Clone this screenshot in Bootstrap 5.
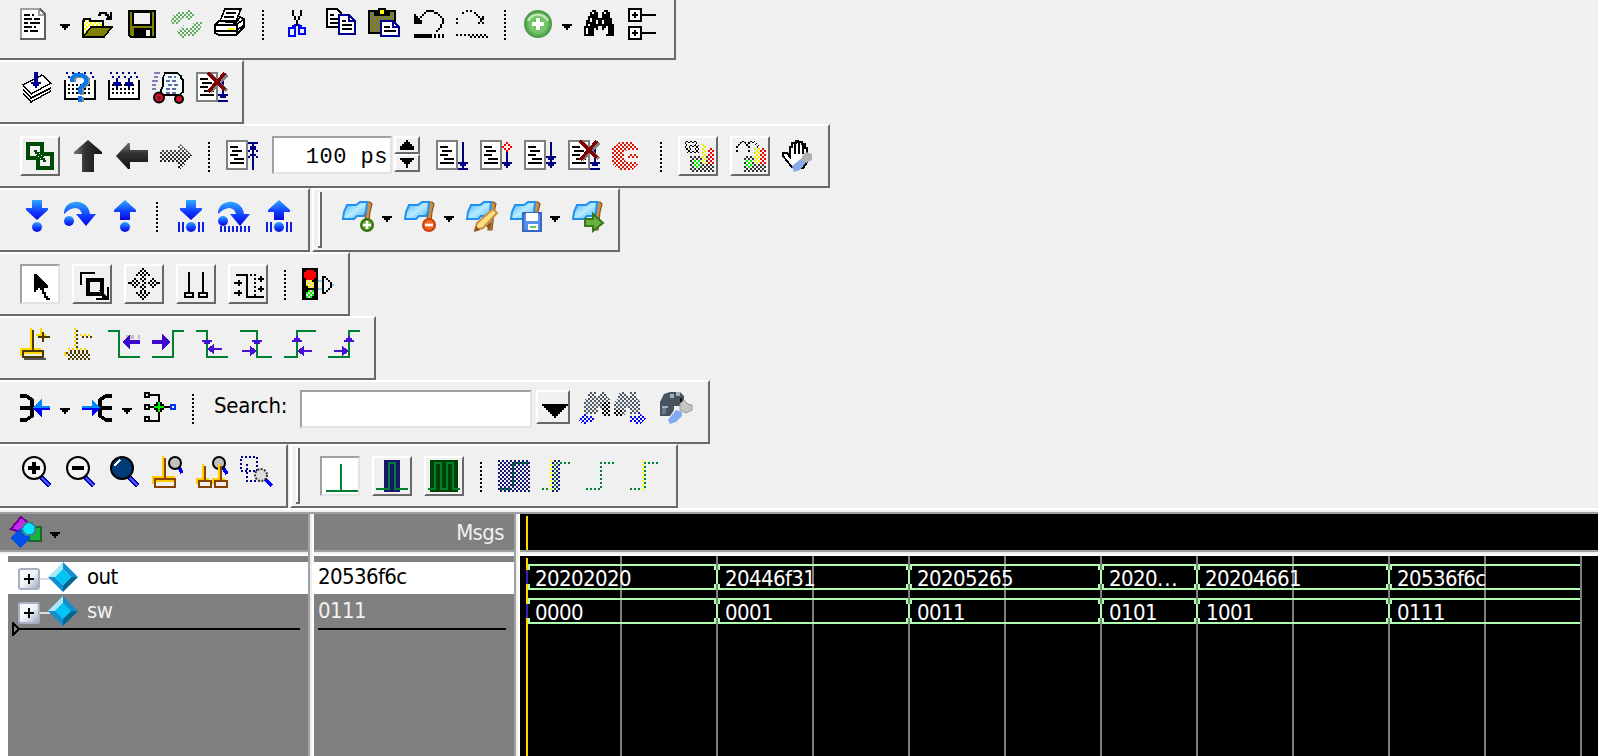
<!DOCTYPE html>
<html lang="en">
<head>
<meta charset="utf-8">
<title>Wave</title>
<link href="https://cdn.jsdelivr.net/npm/bootstrap@5.3.0/dist/css/bootstrap.min.css" rel="stylesheet">
<style>
body{background:#f0f0f0;color:#000;font:22px/28px "DejaVu Sans Condensed","Noto Sans",sans-serif;letter-spacing:-.6px;width:1598px;height:756px}
.bars{margin-top:-4px}
.bar-row{height:64px;gap:2px}
.tb{height:64px;border-top:2px solid #fff;border-right:2px solid #696969;border-bottom:2px solid #696969;padding:10px 14px 10px 20px;gap:12px;align-items:flex-start}
.tb.tall .ic,.tb.tall .sp{margin-top:4px}
.tb.second{border-left:2px solid #fff;padding:2px 14px 2px 4px;gap:0}
.tb.second .inner{gap:12px;padding-top:8px}
.grip{width:4px;height:56px;border-right:2px solid #696969;border-bottom:2px solid #696969;background:#fff;margin:0 20px 0 0}
.ic{width:32px;height:32px;flex:none;fill:none;stroke:#000;stroke-width:1;shape-rendering:crispEdges;display:block;overflow:visible}
.soft{shape-rendering:auto}
.drop{width:10px;height:32px;margin-left:-4px;flex:none;fill:#000;shape-rendering:crispEdges}
.sp{width:2px;height:32px;margin:0 4px;flex:none;background:repeating-linear-gradient(#000 0 2px,transparent 2px 4px) 0 2px/2px 30px no-repeat}
.key{width:40px;height:40px;flex:none;border:2px solid;border-color:#fff #696969 #696969 #fff;padding:2px}
.key.on{background:#fff;border-color:#a0a0a0 #e3e3e3 #e3e3e3 #a0a0a0}
.tb.tall .key .ic{margin-top:0}
.field{height:38px;background:#fff;border:2px solid;border-color:#a0a0a0 #e3e3e3 #e3e3e3 #a0a0a0;flex:none}
.time{width:120px;margin-left:2px;font:22px/39px "Liberation Mono",monospace;letter-spacing:.5px;text-align:right;padding-right:2px;white-space:pre}
.spin{width:26px;margin:0 4px 0 -10px}
.spin div{height:18px;border:2px solid;border-color:#fff #696969 #696969 #fff}
.spin svg{display:block;width:22px;height:14px;shape-rendering:crispEdges}
.wave{border-top:2px solid #fff;height:248px;margin-top:0}
.edge{height:4px;background:linear-gradient(#f0f0f0 50%,#a0a0a0 50%)}
.sash{width:6px;background:linear-gradient(90deg,#a0a0a0 0 2px,#f0f0f0 2px 4px,#fff 4px)}
.head{height:36px;background:#808080;color:#f0f0f0}
.rule6{height:6px;background:linear-gradient(#a0a0a0 0 2px,#f0f0f0 2px 4px,#fff 4px)}
.gray{background:#808080}
.names{width:308px}.msgs{width:200px}
.sig{height:34px;line-height:30px}
.sig.pick{background:#fff;height:32px;color:#000}
.unsel{color:#f0f0f0}
.tree{width:62px;height:32px;margin:0 7px 0 10px;flex:none}
.end{height:14px;display:block;shape-rendering:crispEdges}
.plot text{fill:#fff;font-size:22px}
.plot .dots{letter-spacing:.9px}
</style>
</head>
<body class="overflow-hidden">
<svg width="0" height="0" class="position-absolute">
<defs>
<pattern id="ck" width="2" height="2" patternUnits="userSpaceOnUse"><path d="M0 0h1v1H0zM1 1h1v1H1z" fill="#fff" stroke="none"/></pattern>
<mask id="dm" maskUnits="userSpaceOnUse" x="0" y="0" width="16" height="16"><rect width="16" height="16" fill="url(#ck)" stroke="none"/></mask>
<linearGradient id="blu" x2="0" y2="1"><stop stop-color="#30a8ff"/><stop offset=".6" stop-color="#1038ff"/><stop offset="1" stop-color="#0808d8"/></linearGradient>
<linearGradient id="blk" x2="1" y2="0"><stop stop-color="#777"/><stop offset=".4" stop-color="#333"/><stop offset="1" stop-color="#111"/></linearGradient>
<linearGradient id="blkv" x2="0" y2="1"><stop stop-color="#777"/><stop offset=".4" stop-color="#333"/><stop offset="1" stop-color="#111"/></linearGradient>
<radialGradient id="grn"><stop stop-color="#54c040"/><stop offset=".6" stop-color="#7cc870"/><stop offset="1" stop-color="#4a9a46"/></radialGradient>
<linearGradient id="sky" x2="1" y2="1"><stop stop-color="#38a8f8"/><stop offset=".5" stop-color="#b8ecff"/><stop offset="1" stop-color="#48b0f8"/></linearGradient>
<linearGradient id="box" x2="1" y2="1"><stop stop-color="#fff"/><stop offset=".5" stop-color="#f0f2f8"/><stop offset="1" stop-color="#98a4bc"/></linearGradient>
</defs>
<symbol id="list" viewBox="0 0 16 16"><path d="M.5.5h10v14H.5z" fill="#fff" stroke="#808080"/><path d="M2 3.500h4M3 5.500h5M2 7.500h4M4 9.500h5M2 11.500h7"/></symbol>
<symbol id="kill" viewBox="0 0 16 16"><path d="M13.500 4v9M11 11.500h5M12 12.500h3M11 14.500h5" stroke="#000080"/><path d="M7 1l8.500 8.500M15.500 1.500L7 10" stroke="#808080" stroke-width="1.500"/><path d="M6 .5l8.500 8.500M14.500.5L6 10" stroke="#800000" stroke-width="1.700"/></symbol>
<symbol id="flag" viewBox="0 0 16 16"><path d="M11 1h3l1 1-1 4-1 9h-2l1-9z" fill="#c89048" stroke="#8a5420" stroke-width=".6"/><path d="M2.500 2.500H7l2-1.500h3.500L12 6l-1 2H7.500L6 9.500H.5L1 6z" fill="url(#sky)" stroke="#2090f0"/></symbol>
<symbol id="tray" viewBox="0 0 16 16"><path d="M.5 4v9.500h15V4" fill="#fff" stroke="#000"/><path d="M2 6.500h12M2 8.500h12M2 10.500h12" stroke="#000" stroke-dasharray="1 1"/><path d="M1 .5h14M2 2.500h13" stroke="#000080" stroke-dasharray="1 2"/></symbol>
<symbol id="glass" viewBox="0 0 16 16"><path d="M10 10l5 5" stroke="#0000a8" stroke-width="2.800"/><path d="M11 11l4 4" stroke="#4858ff" stroke-width=".8"/></symbol>
<symbol id="bino" viewBox="0 0 16 16"><path d="M4 0h2v1h1v3h2V1h1V0h2v1h1v3h1v3h1v6h-4V9h-1v1H9V8H7v2H6V9H5v4H0V8h1V5h1V3h1V1h1z" fill="#000" stroke="none"/><path d="M4.500 1v1M10.500 1v1M3.500 4v2M2.500 7v1M1.500 9v3M6.500 5v2M9.500 5v2M11.500 8v4" stroke="#fff" stroke-width=".8"/></symbol>
</svg>

<div class="bars d-flex flex-column">
 <div class="bar-row d-flex">
  <div class="tb d-flex">
   <svg class="ic" viewBox="0 0 16 16"><path d="M0 0h10l3 3v13H0z" fill="#fff" stroke="none"/><path d="M.5 16V.5H10" stroke="#a0a0a0"/><path d="M9.500 1v2.500h3" stroke="#a0a0a0"/><path d="M10 .5l2.500 2.500v12.500H0" stroke="#606060"/><path d="M2 3.500h3m1 0h1M2 5.500h4m1 0h3M2 7.500h2m1 0h5M2 9.500h4m1 0h1M2 11.500h2m1 0h4"/></svg>
   <svg class="drop" viewBox="0 0 5 16"><path d="M0 8h5v1H4v1H3v1H2v-1H1V9H0z"/></svg>
   <svg class="ic" viewBox="0 0 16 16"><path d="M0 6h1V5h3v1h6v4H4l-4 4z" fill="#ff0" stroke="none"/><path d="M0 6h1V5h3v1h6v4H4l-4 4z" fill="#fff" stroke="none" mask="url(#dm)"/><path d="M.5 14V6.500H1v-1h3v1h6.500V9" stroke-width=".6"/><path d="M.5 14.500l4-5h10.500l-4 5z" fill="#808000" stroke-width=".8"/><path d="M8 3.500h1v-1h3v1h1v1h1.500M14.500 2v3M12 5.500h3"/></svg>
   <svg class="ic" viewBox="0 0 16 16"><path d="M1.500 1.500h13v13h-12l-1-1z" fill="#808000"/><path d="M3.500 2h9v6.500h-9z" fill="#f0f0f0"/><path d="M4 10h9v4H4z" fill="#000" stroke="none"/><path d="M10 11h2v3h-2z" fill="#f0f0f0" stroke="none"/></svg>
   <svg class="ic" viewBox="0 0 16 16"><g mask="url(#dm)" fill="#5fac5f" stroke="none"><path d="M0 8l1-4 3-2h5V0l4 3.500L9 7V5H6L4 8z"/><path d="M16 7l-1 4-3 3H7v2l-4-4 4-4v2h3l2-3z"/></g></svg>
   <svg class="ic" viewBox="0 0 16 16"><path d="M5.500.5h8L11 6.500H3z" fill="#fff" stroke-width=".8"/><path d="M6 2.500h5M5 4.500h5"/><path d="M2.500 6.500L.5 8.500v4l2 1h8.500l4-4v-4l-2-1-2 3z" fill="#fff" stroke-width=".8"/><path d="M1 8.500h10l4-3M1 11.500h10l4-3M11.500 8v5" stroke-width=".8"/><path d="M7 10h3v1H7z" fill="#ff0" stroke="none"/></svg>
   <div class="sp"></div>
   <svg class="ic" viewBox="0 0 16 16"><path d="M6.500 1v3M7.500 4v2M8.500 6v3M10.500 1v3M9.500 4v2"/><path d="M7.500 8v1h-1v1h-2v4h3V9M9.500 8v1h1v1h2v3h-3V9" stroke="#00f"/></svg>
   <svg class="ic" viewBox="0 0 16 16"><path d="M1.500.5h5l2 2v7h-7z" fill="#fff"/><path d="M3 3.500h2M3 5.500h4M3 7.500h4"/><path d="M7.500 3.500h5l3 3v6.500h-8z" fill="#fff" stroke="#000090"/><path d="M12.500 4v2.500H15" stroke="#000090"/><path d="M9 6.500h2M9 8.500h5M9 10.500h5"/></svg>
   <svg class="ic" viewBox="0 0 16 16"><path d="M.5 1.500h13v11H.5z" fill="#808000"/><path d="M1 2h12v10H1z" fill="#777" stroke="none" mask="url(#dm)"/><path d="M3.500 3.500V2.500h2V.5h3v2h2v1z" fill="#ff0"/><path d="M6.500 6.500h6l3 3v4.500h-9z" fill="#fff" stroke="#000090"/><path d="M12.500 7v2.500H15" stroke="#000090"/><path d="M8 9.500h3M8 11.500h6"/></svg>
   <svg class="ic" viewBox="0 0 16 16"><path d="M1 3h1v1h1v1h1v1h1v2H1z" fill="#000" stroke="none"/><path d="M4 4.500h1M5 3.500h1M6 2.500h1M7 1.500h4M11 2.500h2M13 3.500h1M14.500 4v1M15.500 5v3M14.500 8v2M13.500 10v1M12.500 11v1"/><path d="M1 14h9" stroke-width="2"/><path d="M11 14h5" stroke-width="2" stroke-dasharray="1 1"/></svg>
   <svg class="ic" viewBox="0 0 16 16"><path d="M0 5.500h1M0 7.500h1M3 2.500h1M5 1.500h1M7 1.500h1M9 2.500h1M10 3.500h1M11 4.500h1M13 4.500h1M12 5.500h1M11 7.500h1M12 6.500h1M13 7.500h1M13 5.500h1"/><path d="M0 13.500h16" stroke-dasharray="1 1"/><path d="M7 14.500h9" stroke-dasharray="1 1"/></svg>
   <div class="sp"></div>
   <svg class="ic soft" viewBox="0 0 16 16"><circle cx="8" cy="8" r="6.600" fill="url(#grn)" stroke="#4c9c4c" stroke-width=".8"/><path d="M3 6.500a5.500 5.500 0 0 1 10 0" stroke="#c0e8b8" stroke-width="1.200"/><path d="M8 5v6M5 8h6" stroke="#fff" stroke-width="2"/></svg>
   <svg class="drop" viewBox="0 0 5 16"><path d="M0 8h5v1H4v1H3v1H2v-1H1V9H0z"/></svg>
   <svg class="ic" viewBox="0 -1 16 16"><use href="#bino" width="16" height="16"/></svg>
   <svg class="ic" viewBox="0 0 16 16"><path d="M.5.5h6v6h-6zM.5 9.500h6v6h-6z" fill="#fff"/><path d="M7 3.500h7M7 12.500h7M2 3.500h3M3.500 2v3M2 12.500h3M3.500 11v3"/></svg>
  </div>
 </div>

 <div class="bar-row d-flex">
  <div class="tb d-flex">
   <svg class="ic" viewBox="0 0 16 16"><path d="M1.500 11l4 4.500 10-5V5l-5-3.500-9 5z" fill="#fff" stroke="none"/><path d="M1.500 6.500L11 1.500l4.500 4-10 5.500zM1.500 8.500l4 4.500 10-5M1.500 10.500l4 4.500 10-5.500" stroke-width=".7"/><path d="M5.500 5.500h5M6.500 6.500h3M7.500 7.500h1" stroke="#000090" /><path d="M8 0v6" stroke="#000090" stroke-width="2"/></svg>
   <svg class="ic" viewBox="0 0 16 16"><use href="#tray"/><path d="M5 5V3l2-1h3l2 1.500v2L9 8v3.500M9 12.500v2.500" stroke="#888" stroke-width="2"/><path d="M4 5V3l1.500-1.500H9L11 3v2.500L8 8v3M8 12v3" stroke="#0878f0" stroke-width="2"/></svg>
   <svg class="ic" viewBox="0 0 16 16"><use href="#tray"/><path d="M4.500 3v5M2.500 5.500h4M3 6.500h3M10.500 3v5M8.500 5.500h4M9 6.500h3" stroke="#000090"/></svg>
   <svg class="ic" viewBox="0 0 16 16"><path d="M1 .5h3M1 2.500h2M0 4.500h3M0 6.500h2M0 8.500h2" stroke="#8080b0"/><path d="M6.500.5h6l2 1.500v1l1 1v6l-2 1.500h-8l-1-1V9l1-2V3z" fill="#efffff" stroke-width=".8"/><path d="M8 2.500h4M7 4.500h5M8 6.500h5M7 8.500h5M7 10.500h5" stroke="#6868a0" stroke-dasharray="2 1"/><g fill="#d01030" class="soft"><circle cx="3.500" cy="12.800" r="2.500"/><circle cx="13.500" cy="13.500" r="2"/></g><path d="M3.500 12v2M2.500 13h2" stroke="#801020" stroke-width=".6"/></svg>
   <svg class="ic" viewBox="0 0 16 16"><use href="#list"/><use href="#kill"/></svg>
  </div>
 </div>

 <div class="bar-row d-flex">
  <div class="tb tall d-flex">
   <div class="key"><svg class="ic" viewBox="0 0 16 16"><path d="M2 2h7v7H2zM7 7h7v7H7z" stroke="#004a08" stroke-width="2"/><path d="M6 6l4 4" stroke="#fff" stroke-width="2"/><path d="M5 5.500h1v1h1v1h1v1h1v1h1v1h1" stroke="#004a08"/></svg></div>
   <svg class="ic soft" viewBox="0 0 16 16"><path d="M8 0l7 6v1h-4v9H5V7H1V6z" fill="url(#blk)" stroke="none"/></svg>
   <svg class="ic soft" viewBox="0 0 16 16"><path d="M0 8l6-6.500h1V5h9v6H7v3.500H6z" fill="url(#blkv)" stroke="none"/></svg>
   <svg class="ic" viewBox="0 0 16 16"><g mask="url(#dm)"><path d="M16 8l-6-6H9v3H0v6h9v4h1z" fill="url(#blkv)" stroke="none"/></g></svg>
   <div class="sp"></div>
   <svg class="ic" viewBox="0 0 16 16"><use href="#list"/><path d="M13.500 1v14M11 1.500h5M12 4.500h3M11 5.500h1m3 0h1M12 7.500h3M11 8.500h1m3 0h1M12 3.500h3" stroke="#000080"/></svg>
   <div class="field time">100 ps</div>
   <div class="spin"><div><svg viewBox="0 0 11 7"><path d="M5 1h1v1h1v1h1v1h1v2H2V4h1V3h1V2h1z"/></svg></div><div><svg viewBox="0 0 11 7"><path d="M2 1h7v1H8v1H7v1H6v2H5V4H4V3H3V2H2z"/></svg></div></div>
   <svg class="ic" viewBox="0 0 16 16"><use href="#list"/><path d="M13.500 1v14M11 11.500h5M12 12.500h3M11 14.500h5" stroke="#000080"/></svg>
   <svg class="ic" viewBox="0 0 16 16"><use href="#list"/><path d="M13.500 6v8M11 11.500h5M12 12.500h3" stroke="#000080"/><path d="M13 1.500h1M12 2.500h1m1 0h1M11 3.500h1m3 0h1M12 4.500h1m1 0h1M13 5.500h1" stroke="#f00"/></svg>
   <svg class="ic" viewBox="0 0 16 16"><use href="#list"/><path d="M13.500 1v13M11 8.500h5M12 9.500h3M11 11.500h5M12 12.500h3" stroke="#000080"/></svg>
   <svg class="ic" viewBox="0 0 16 16"><use href="#list"/><use href="#kill"/></svg>
   <svg class="ic" viewBox="0 0 16 16"><path d="M5 1h6l2 2v10l-2 2H5l-2-2V3z" fill="#fff" stroke="none"/><path d="M4 1h6l3 3v8l-3 3H4l-4-3V4z" fill="#f0f0f0" stroke="none"/><path d="M4 1h6l3 3v1H8L6 6v4l2 1h5v1l-3 3H4l-4-3V4zM8 7h5v2H8z" fill="#d81808" stroke="none" mask="url(#dm)"/></svg>
   <div class="sp"></div>
   <div class="key"><svg class="ic" viewBox="0 0 16 16"><g mask="url(#dm)"><path d="M2 1h5v5H3L2 4zM4 3h4v3H4z" stroke-width="1.200"/><path d="M4 8h12v8H4z" fill="#333" stroke="none"/><path d="M10 2h2v10h-2z" fill="#ee0" stroke="none"/><path d="M13 4h3v8h-3z" fill="#e00" stroke="none"/><path d="M6 10h3v4H6z" fill="#0e0" stroke="none"/></g></svg></div>
   <div class="key"><svg class="ic" viewBox="0 0 16 16"><g mask="url(#dm)"><path d="M1.500 6V3l2-2h2l2 2v3M6 3l2-2h2l2 2v4" stroke-width="1.300"/><path d="M5 8h11v8H5z" fill="#333" stroke="none"/><path d="M10 4h3v8h-3z" fill="#ee0" stroke="none"/><path d="M13 4h3v8h-3z" fill="#e00" stroke="none"/><path d="M6 10h3v4H6z" fill="#0e0" stroke="none"/></g></svg></div>
   <svg class="ic" viewBox="0 0 16 16"><path d="M4.500 13l-4-5V6.500h2L4 8.500V3.500h1V1.500h2V.5h1v.5h2v1h1.500v2h1v7l-2 3H6z" fill="#fff"/><path d="M6.500 2v5M8.500 1v6M10.500 2.500V7" stroke-width=".9"/><g class="soft" stroke="none"><path d="M5 13l5-4 2 2-3 4-3 1z" fill="#88aaec"/><path d="M10 8l2-2 3 1v3l-3 1.500-2-1.500z" fill="#b0b0b0"/></g></svg>
  </div>
 </div>

 <div class="bar-row d-flex">
  <div class="tb d-flex">
   <svg class="ic soft" viewBox="0 0 16 16"><g fill="url(#blu)" stroke="none"><path d="M6 0h5v4h3v1l-5.500 5L3 5V4h3z"/><circle cx="8.500" cy="13.500" r="2.500"/></g></svg>
   <svg class="ic soft" viewBox="0 0 16 16"><g fill="url(#blu)" stroke="none"><path d="M0 6C1-1 12-1 13 7h3l-5 6-5-6h3C8 3 4 3 0 7z"/><circle cx="2.500" cy="10.500" r="2.500"/></g></svg>
   <svg class="ic soft" viewBox="0 0 16 16"><g fill="url(#blu)" stroke="none"><path d="M8.500 0L14 5v1h-3v4H6V6H3V5z"/><circle cx="8.500" cy="13.500" r="2.500"/></g></svg>
   <div class="sp"></div>
   <svg class="ic soft" viewBox="0 0 16 16"><g fill="url(#blu)" stroke="none"><path d="M6 0h5v4h3v1l-5.500 5L3 5V4h3z"/><circle cx="8.500" cy="13.500" r="2.500"/></g><path d="M2 13.500h4M12 13.500h4" stroke="#1020e0" stroke-width="5" stroke-dasharray="1 1"/></svg>
   <svg class="ic soft" viewBox="0 0 16 16"><g fill="url(#blu)" stroke="none"><path d="M0 6C1-1 12-1 13 7h3l-5 6-5-6h3C8 3 4 3 0 7z"/><circle cx="2.500" cy="10.500" r="2.500"/></g><path d="M1 14.500h15" stroke="#1020e0" stroke-width="3" stroke-dasharray="1 1"/></svg>
   <svg class="ic soft" viewBox="0 0 16 16"><g fill="url(#blu)" stroke="none"><path d="M8.500 0L14 5v1h-3v4H6V6H3V5z"/><circle cx="8.500" cy="13.500" r="2.500"/></g><path d="M2 13.500h4M12 13.500h4" stroke="#1020e0" stroke-width="5" stroke-dasharray="1 1"/></svg>
  </div>
  <div class="tb second d-flex"><div class="grip"></div><div class="inner d-flex">
   <svg class="ic soft" viewBox="0 0 16 16"><use href="#flag"/><circle cx="12.500" cy="12.500" r="3" fill="#60a830" stroke="#387010"/><path d="M12.500 10.500v4M10.500 12.500h4" stroke="#fff" stroke-width="1.300"/></svg>
   <svg class="drop" viewBox="0 0 5 16"><path d="M0 8h5v1H4v1H3v1H2v-1H1V9H0z"/></svg>
   <svg class="ic soft" viewBox="0 0 16 16"><use href="#flag"/><circle cx="12.500" cy="12.500" r="3" fill="#f06820" stroke="#c84008"/><path d="M10.500 12.500h4" stroke="#fff" stroke-width="1.300"/></svg>
   <svg class="drop" viewBox="0 0 5 16"><path d="M0 8h5v1H4v1H3v1H2v-1H1V9H0z"/></svg>
   <svg class="ic soft" viewBox="0 0 16 16"><use href="#flag"/><path d="M4.500 15l1-3.500 8-7 2 2-7 7.500z" fill="#ffe080" stroke="#c89040"/><path d="M4 16l1-3 2 2zM10 13l3-2-1 4z" fill="#905020" stroke="none"/></svg>
   <svg class="ic soft" viewBox="0 0 16 16"><use href="#flag"/><path d="M6.500 6.500h9v9h-9z" fill="#5890e8" stroke="#3868c0"/><path d="M8 6.500h6v4H8zM9 12h5v3H9z" fill="#fff" stroke="none"/><path d="M10 13h3v1h-3z" fill="#60d040" stroke="none"/></svg>
   <svg class="drop" viewBox="0 0 5 16"><path d="M0 8h5v1H4v1H3v1H2v-1H1V9H0z"/></svg>
   <svg class="ic soft" viewBox="0 0 16 16"><use href="#flag"/><path d="M6.500 9.500h4V7l5 4.500-5 4V13h-4z" fill="#68b040" stroke="#387818"/></svg>
  </div></div>
 </div>

 <div class="bar-row d-flex">
  <div class="tb tall d-flex">
   <div class="key on"><svg class="ic" viewBox="0 0 16 16"><path d="M5 3h1l6 6v1h-2v2h1v2h1v1h1v1h-2v-1h-1v-2H9v-2H8v-1H7v1H6v1H5z" fill="#000" stroke="none"/></svg></div>
   <div class="key"><svg class="ic" viewBox="0 0 16 16"><path d="M3 8V3h6M6 14V6h8M9 15h3" stroke="#fff"/><path d="M2.500 8.500v-6h7"/><path d="M6 6h7v7H6z" stroke-width="2"/><path d="M10 15.500h6v-6M12 11l3 4M13 14.500h3" stroke-width="1.300"/></svg></div>
   <div class="key"><svg class="ic" viewBox="0 0 16 16"><path d="M7 .5h1M6 1.500h1m1 0h1M5 2.500h1m1 0h1m1 0h1M4 3.500h1m1 0h1m1 0h1m1 0h1M7 4.500h1M6 5.500h1m1 0h1M3 5.500h1m8 0h1M2 6.500h1m1 0h1m2 0h1m3 0h1m1 0h1M1 7.500h1m1 0h1m1 0h1m2 0h1m1 0h1m1 0h1m1 0h1M2 8.500h1m1 0h1m2 0h1m3 0h1m1 0h1M3 9.500h1m2 0h1m1 0h1m3 0h1M7 10.500h1M6 11.500h1m1 0h1M4 12.500h1m1 0h1m1 0h1m1 0h1M5 13.500h1m1 0h1m1 0h1M6 14.500h1m1 0h1M7 15.500h1M0 7.500h1M15 7.500h1"/></svg></div>
   <div class="key"><svg class="ic" viewBox="0 0 16 16"><path d="M4.500 2v11M2.500 12.500h4v2h-4zM11.500 2v11M9.500 12.500h4v2h-4z"/></svg></div>
   <div class="key"><svg class="ic" viewBox="0 0 16 16"><path d="M2 3.500h5.500v11H16M1 7.500h4M3.500 6v3M1 12.500h4M3.500 11v3M13 5.500h3M14.500 4v3M13 10.500h3M14.500 9v3"/><path d="M9 3.500h3M11.500 5v10" stroke-dasharray="1 1"/></svg></div>
   <div class="sp"></div>
   <svg class="ic" viewBox="0 0 16 16"><path d="M0 0h8v16H0z" fill="#000" stroke="none"/><path d="M2 1h4v1h1v3H6v1H2V5H1V2h1z" fill="#f00" stroke="none"/><path d="M3 6h2v1h1v2H5v1H3V9H2V7h1z" fill="#ddd" stroke="none"/><path d="M3 11h2v1h1v2H5v1H3v-1H2v-2h1z" fill="#ddd" stroke="none"/><g mask="url(#dm)" stroke="none"><path d="M2 6h4v4H2z" fill="#fe0"/><path d="M2 11h4v4H2z" fill="#0e0"/></g><path d="M8 6.500h2M8 10.500h2M15 8.500h1" stroke="#8cc8e8"/><path d="M10.500 4v9M11 4.500h1M12 5.500h1M13.500 6v1M14.500 7v3M13.500 10v1M12 11.500h1M11 12.500h1"/></svg>
  </div>
 </div>

 <div class="bar-row d-flex">
  <div class="tb d-flex">
   <svg class="ic" viewBox="0 0 16 16"><path d="M5.500 0v11M10.500 0v4M8 3.500h5M.5 14v-3.500h10" stroke="#ffd800"/><path d="M6.500 1v10M11.500 2v5M9 4.500h6M1.500 11.500h10v3h-10z" stroke="#4a3a00"/><path d="M2 12.500h9" stroke="#ffd800"/><path d="M2 15.500h11" stroke="#555"/></svg>
   <svg class="ic" viewBox="0 0 16 16"><g stroke-dasharray="1 1"><path d="M5.500 0v10M8 3.500h5M2 10.500h9M0 12.500h1M0 13.500h1" stroke="#ffd800"/><path d="M6.500 1v10M9 4.500h6M3 11.500h9M1 12.500h12M2 13.500h11M3 14.500h10M2 15.500h11" stroke="#4a3a00"/></g></svg>
   <svg class="ic" viewBox="0 0 16 16"><path d="M0 1.500h5.500v13H16" stroke="#008030"/><path d="M9 4.500h4m2 0h1" stroke="#c0c0c0" stroke-width="2"/><path d="M7 7l4-4v3h5v2h-5v3z" fill="#3c08d0" stroke="none"/></svg>
   <svg class="ic" viewBox="0 0 16 16"><path d="M0 14.500h10.500v-13H16" stroke="#008030"/><path d="M9 7L5 3v3H0v2h5v3z" fill="#3c08d0" stroke="none"/></svg>
   <svg class="ic" viewBox="0 0 16 16"><path d="M0 1.500h5.500v13H16" stroke="#008030"/><path d="M3 6h5v1H7v1H4V7H3zM6 10l3-2v2h4v1H9v2L6 11z" fill="#4810d0" stroke="none"/></svg>
   <svg class="ic" viewBox="0 0 16 16"><path d="M0 1.500h8.500v13H16" stroke="#008030"/><path d="M6 6h5v1h-1v1H7V7H6zM8 11L5 9v2H1v1h4v2l3-2z" fill="#4810d0" stroke="none"/></svg>
   <svg class="ic" viewBox="0 0 16 16"><path d="M0 14.500h6.500v-13H16" stroke="#008030"/><path d="M4 7h5V6H8V5H7V4H6v1H5v1H4zM7 11l3-2v2h4v1h-4v2l-3-2z" fill="#4810d0" stroke="none"/></svg>
   <svg class="ic" viewBox="0 0 16 16"><path d="M0 14.500h10.500v-13H16" stroke="#008030"/><path d="M8 7h5V6h-1V5h-1V4h-1v1H9v1H8zM10 11L7 9v2H3v1h4v2l3-2z" fill="#4810d0" stroke="none"/></svg>
  </div>
 </div>

 <div class="bar-row d-flex">
  <div class="tb d-flex">
   <svg class="ic" viewBox="0 0 16 16"><path d="M0 2h3l3 2v8l-3 2H0M0 8h6" stroke-width="1.800"/><path d="M6 8l5-4.500V7h4v1z" fill="#0088ff" stroke="none"/><path d="M6 8l5 4.500V9h4V8z" fill="#00f" stroke="none"/></svg>
   <svg class="drop" viewBox="0 0 5 16"><path d="M0 8h5v1H4v1H3v1H2v-1H1V9H0z"/></svg>
   <svg class="ic" viewBox="0 0 16 16"><path d="M15 2h-3L9 4v8l3 2h3M9 8h6" stroke-width="1.800"/><path d="M9 8L5 3.500V7H0v1z" fill="#0088ff" stroke="none"/><path d="M9 8l-4 4.500V9H0V8z" fill="#00f" stroke="none"/></svg>
   <svg class="drop" viewBox="0 0 5 16"><path d="M0 8h5v1H4v1H3v1H2v-1H1V9H0z"/></svg>
   <svg class="ic" viewBox="0 0 16 16"><path d="M3 1.500h4.500v13H3M3 7.500h10M.5.500h2v2h-2zM.5 6.500h2v2h-2zM.5 12.500h2v2h-2z"/><path d="M7 4h1v1h1v1h1v1h1v1h-1v1H9v1H8v1H7v-1H6V9H5V8H4V7h1V6h1V5h1z" fill="#000" stroke="none"/><path d="M7.500 5v5M5 7.500h5" stroke="#0e0"/><path d="M13.500 6.500h2v2h-2z" stroke="#0030ff"/></svg>
   <div class="sp"></div>
   <div class="ms-1 me-0" style="width:74px;letter-spacing:-.2px">Search:</div>
   <div class="field" style="width:232px;margin-top:-2px"></div>
   <div class="key" style="width:34px;height:34px;margin:-2px -4px 0 -8px;padding:0"><svg class="ic" viewBox="0 0 16 16"><path d="M2 6h13v1h-1v1h-1v1h-1v1h-1v1h-1v1H9v1H8v-1H7v-1H6v-1H5V9H4V8H3V7H2z" fill="#000" stroke="none"/></svg></div>
   <svg class="ic" viewBox="0 0 16 16"><g mask="url(#dm)" stroke="none"><path d="M5 0h4v2h2V0h3v2l2 2v8h-4V8h-2v3H3V4l2-1z" fill="#4c5864"/><path d="M12 5h4v7h-4z" fill="#000"/><path d="M0 14l4-4v2h4v3H4v1H2z" fill="#00f"/></g></svg>
   <svg class="ic" viewBox="0 0 16 16" style="margin-left:-8px"><g mask="url(#dm)" stroke="none"><path d="M3 0h3v2h2V0h3v3l2 2v6H8V8H6v2l-1 2H0V5l2-2z" fill="#4c5864"/><path d="M0 9h4v3H0z" fill="#000"/><path d="M8 12h4v-2l4 3-3 3h-2v-1H8z" fill="#00f"/></g></svg>
   <svg class="ic soft" viewBox="0 0 16 16" style="margin:0 2px"><g stroke="none"><path d="M2 1l3-1h5l2 2v5H7v2l-2 3H0V5z" fill="#47535f"/><path d="M5 1h2v2H5zM8 0h2v2H8zM1 7h3v1H1z" fill="#a0b0bc"/><path d="M1 8h2v3H1z" fill="#6e7a86"/><path d="M10 3h1v2h-1z" fill="#111"/><path d="M4 14l4-5 3 1v2l-3 3-3 1z" fill="#82aaf0"/><path d="M10 6l2-2 2 2 2 .5V9l-3 1.500-3-1.500z" fill="#c4c4c4" stroke="#999" stroke-width=".5"/></g></svg>
  </div>
 </div>

 <div class="bar-row d-flex">
  <div class="tb d-flex">
   <svg class="ic" viewBox="0 0 16 16"><use href="#glass"/><circle cx="7" cy="6" r="5.500" fill="#f4f4f4" class="soft"/><path d="M7 3v6M4 6h6" stroke-width="1.800"/></svg>
   <svg class="ic" viewBox="0 0 16 16"><use href="#glass"/><circle cx="7" cy="6" r="5.500" fill="#f4f4f4" class="soft"/><path d="M4 6h6" stroke-width="1.800"/></svg>
   <svg class="ic" viewBox="0 0 16 16"><use href="#glass"/><circle cx="7" cy="6" r="5.500" fill="#003c78" class="soft"/><path d="M3 5l3-3" stroke="#fff" stroke-width="1.200"/></svg>
   <svg class="ic" viewBox="0 0 16 16"><path d="M13.500 5.500l1.500 3" stroke="#00f" stroke-width="1.800"/><circle cx="11.500" cy="3.500" r="3" fill="#c0c0c0" class="soft"/><path d="M5.500 0v11M.5 14v-3.500h11" stroke="#fc0"/><path d="M6.500 1v10M1.500 11.500h10v4h-10z" stroke="#884400"/><path d="M2 12.500h9" stroke="#fc0"/></svg>
   <svg class="ic" viewBox="0 0 16 16"><path d="M13.500 5.500l2 3.500" stroke="#00f" stroke-width="1.800"/><circle cx="11.500" cy="3.500" r="3" fill="#c0c0c0" class="soft"/><path d="M3.500 4v8M11.500 4v8M.5 14v-2.500h6M8.500 14v-2.500h6" stroke="#fc0"/><path d="M4.500 5v7M12.500 5v7M1.500 12.500h6v3h-6zM9.500 12.500h6v3h-6z" stroke="#884400"/></svg>
   <svg class="ic" viewBox="0 0 16 16"><path d="M.5.5h8v7h-8zM3.500 4v8.500H8" stroke="#000090" stroke-dasharray="1 1"/><path d="M12 11l4 4" stroke="#00f" stroke-width="1.500"/><circle cx="10.500" cy="9.500" r="3" fill="#ddd" stroke="#333" stroke-dasharray="1 .7" class="soft"/></svg>
  </div>
  <div class="tb second d-flex"><div class="grip"></div><div class="inner tall d-flex">
   <div class="key on"><svg class="ic" viewBox="0 0 16 16"><path d="M8.500 2v13M1 15.500h16" stroke="#008030"/></svg></div>
   <div class="key"><svg class="ic" viewBox="0 0 16 16"><path d="M4 0h8v16H4z" fill="#18186c" stroke="none"/><path d="M0 14.500h6.500v-13h3v13H16" stroke="#008030"/></svg></div>
   <div class="key"><svg class="ic" viewBox="0 0 16 16"><path d="M1 0h14v16H1z" fill="#004000" stroke="none"/><path d="M0 14.500h3.500v-13h3v13h3v-13h3v13H16" stroke="#008030"/></svg></div>
   <div class="sp mt-1"></div>
   <svg class="ic mt-1" viewBox="0 0 16 16"><path d="M0 0h16v16H0z" fill="#18186c" stroke="none" mask="url(#dm)"/><path d="M1 14.500h6M8 1.500h8M7.500 2v12" stroke="#008030" stroke-dasharray="1 1"/></svg>
   <svg class="ic mt-1" viewBox="0 0 16 16"><path d="M5 0h4v16H5z" fill="#18186c" stroke="none" mask="url(#dm)"/><path d="M0 14.500h6.500v-13H15" stroke="#008030" stroke-dasharray="1 1"/><path d="M4.500 0v16" stroke="#ff0" stroke-dasharray="1 1"/></svg>
   <svg class="ic mt-1" viewBox="0 0 16 16"><path d="M0 14.500h7.500v-13H15" stroke="#008030" stroke-dasharray="1 1"/></svg>
   <svg class="ic mt-1" viewBox="0 0 16 16"><path d="M0 14.500h7.500v-13H15" stroke="#008030" stroke-dasharray="1 1"/><path d="M6.500 0v16" stroke="#ff0" stroke-dasharray="1 1"/></svg>
  </div></div>
 </div>
</div>

<div class="wave">
 <div class="edge"></div>
 <div class="d-flex h-100">
  <div class="names d-flex flex-column flex-shrink-0">
   <div class="head d-flex ps-2">
    <svg class="ic" style="margin:2px 12px 0 2px" viewBox="0 0 16 16"><path d="M.5 6.500l5-6 5 4-4 4z" fill="#c828f0" stroke="#700090"/><path d="M9.500 5.500h6v7h-6z" fill="#18b040" stroke="#186830"/><path d="M5 6l5 5-5 5-5-5z" fill="#0050e8" stroke="none"/><circle cx="9.500" cy="6.500" r="3.300" fill="#00e8ff" stroke="#408090"/></svg>
    <svg class="drop" style="margin-top:2px" viewBox="0 0 5 16"><path d="M0 8h5v1H4v1H3v1H2v-1H1V9H0z"/></svg>
   </div>
   <div class="rule6"></div>
   <div class="bg-white ps-2 flex-grow-1"><div class="gray h-100 pt-1"><div style="height:2px"></div>
    <div class="sig pick d-flex"><svg class="tree" viewBox="0 0 62 32"><path d="M22 17h10" stroke="#ddd" stroke-width="2"/><rect x="1" y="7" width="20" height="20" rx="2" fill="url(#box)" stroke="#a8b0c4" stroke-width="2"/><path d="M11 12v10M6 17h10" stroke="#000" stroke-width="2"/><path d="M45 0L30 15h7l8-8z" fill="#a8e8f8"/><path d="M45 0v7l8 8h7zM30 15h7l8 8v7z" fill="#1090d0"/><path d="M60 15h-7l-8 8v7z" fill="#006890"/><path d="M45 7l8 8-8 8-8-8z" fill="#00c4f4"/></svg><span>out</span></div>
    <div class="sig d-flex unsel"><svg class="tree" style="margin-top:2px" viewBox="0 0 62 32"><path d="M22 17h10" stroke="#ddd" stroke-width="2"/><rect x="1" y="7" width="20" height="20" rx="2" fill="url(#box)" stroke="#a8b0c4" stroke-width="2"/><path d="M11 12v10M6 17h10" stroke="#000" stroke-width="2"/><path d="M45 0L30 15h7l8-8z" fill="#a8e8f8"/><path d="M45 0v7l8 8h7zM30 15h7l8 8v7z" fill="#1090d0"/><path d="M60 15h-7l-8 8v7z" fill="#006890"/><path d="M45 7l8 8-8 8-8-8z" fill="#00c4f4"/></svg><span style="padding-top:2px">sw</span></div>
    <svg class="end" style="margin-top:-6px" width="300" viewBox="0 0 300 14"><path d="M5 1v12l6-6zM10 7h282" fill="none" stroke="#000" stroke-width="1.500"/><path d="M12 7h280" stroke="#000" stroke-width="2"/></svg>
   </div></div>
  </div>
  <div class="sash"></div>
  <div class="msgs d-flex flex-column flex-shrink-0">
   <div class="head text-end" style="padding:5px 10px 0 0">Msgs</div>
   <div class="rule6"></div>
   <div class="gray flex-grow-1" style="padding-top:6px">
    <div class="sig pick ps-1">20536f6c</div>
    <div class="sig ps-1 unsel" style="padding-top:2px">0111</div>
    <svg class="end" style="margin-top:-6px" width="200" viewBox="0 0 200 14"><path d="M4 7h188" stroke="#000" stroke-width="2"/></svg>
   </div>
  </div>
  <div class="sash"></div>
  <div class="flex-grow-1 d-flex flex-column">
   <div class="head bg-black"><svg width="10" height="36" class="d-block"><path d="M7 2v34" stroke="#ffd800" stroke-width="2"/></svg></div>
   <div class="rule6"></div>
   <svg class="plot d-block bg-black" width="1078" height="200" viewBox="520 556 1078 200" shape-rendering="crispEdges">
    <defs><g id="x"><path d="M-1 564v6M3 564v6M-1 584v6M3 584v6" stroke="#b0ffb0" stroke-width="2"/><path d="M1 570v14" stroke="#b0ffb0" stroke-width="2"/></g>
    <g id="bus"><path d="M528 565H716M718 565H908M910 565h190M1102 565h94M1198 565h190M1390 565h190M528 589H716M718 589H908M910 589h190M1102 589h94M1198 589h190M1390 589h190M529 564v6M529 584v6" stroke="#b0ffb0" stroke-width="2"/><path d="M527 570v14" stroke="#4020b0" stroke-width="2"/>
    <use href="#x" x="716"/><use href="#x" x="908"/><use href="#x" x="1100"/><use href="#x" x="1196"/><use href="#x" x="1388"/></g></defs>
    <path d="M621 556v200M717 556v200M813 556v200M909 556v200M1005 556v200M1101 556v200M1197 556v200M1293 556v200M1389 556v200M1485 556v200M1581 556v200" stroke="#808080" stroke-width="2"/>
    <path d="M527 558v198" stroke="#ffd800" stroke-width="2"/>
    <use href="#bus"/><use href="#bus" y="34"/>
    <text x="535" y="586">20202020</text><text x="725" y="586">20446f31</text><text x="917" y="586">20205265</text><text x="1109" y="586">2020<tspan class="dots">...</tspan></text><text x="1205" y="586">20204661</text><text x="1397" y="586">20536f6c</text>
    <text x="535" y="620">0000</text><text x="725" y="620">0001</text><text x="917" y="620">0011</text><text x="1109" y="620">0101</text><text x="1206" y="620">1001</text><text x="1397" y="620">0111</text>
   </svg>
  </div>
 </div>
</div>
<script src="https://cdn.jsdelivr.net/npm/bootstrap@5.3.0/dist/js/bootstrap.bundle.min.js"></script>
</body>
</html>
